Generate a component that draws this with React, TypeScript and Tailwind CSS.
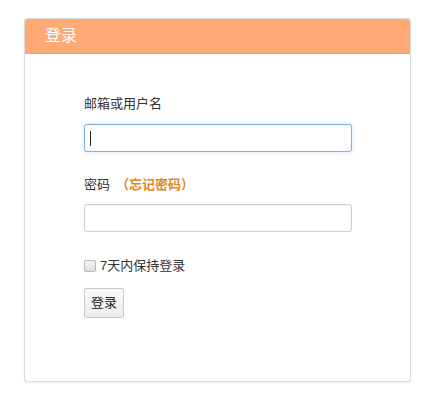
import React from "react";

export default function App() {
  return (
    <div
      className="min-h-[407px] w-[432px] bg-white pt-[18px] pl-[24px]"
      style={{ fontFamily: '"Liberation Sans", "Noto Sans CJK SC", sans-serif' }}
    >
      <div className="w-[387px] rounded-[3px] border border-[#dcdcdc] bg-white shadow-[0_1px_2px_rgba(0,0,0,0.08)]">
        {/* header */}
        <div className="flex h-[35px] items-center rounded-t-[3px] border-b border-[#f5a06a] bg-[#ffaa74] pl-[20px] text-[16px] text-white">
          登录
        </div>

        {/* body */}
        <div className="pl-[59px] pt-[40px] pb-[63px] text-[13px] text-[#333]">
          <div className="mb-[10px] h-[20px] leading-[20px]">邮箱或用户名</div>
          <div className="relative h-[28px] w-[268px] rounded-[3px] border border-[#7fb2d8] bg-white shadow-[inset_0_1px_1px_rgba(0,0,0,0.05),0_0_4px_rgba(102,175,233,0.35)]">
            <span className="absolute left-[5px] top-[6px] h-[15px] w-px bg-[#222]" />
          </div>

          <div className="mt-[23px] mb-[9px] h-[20px] leading-[20px]">
            密码<span className="ml-[6px] font-bold text-[#e0881c]">（忘记密码）</span>
          </div>
          <div className="h-[28px] w-[268px] rounded-[3px] border border-[#cccccc] bg-white shadow-[inset_0_1px_1px_rgba(0,0,0,0.05)]" />

          <div className="mt-[24px] flex h-[20px] items-center gap-[4px] leading-[20px]">
            <span className="h-[12px] w-[12px] rounded-[2px] border border-[#b5b5b5] bg-gradient-to-b from-[#f4f4f4] to-[#dedede]" />
            <span>7天内保持登录</span>
          </div>

          <div className="mt-[12px] flex h-[30px] w-[40px] items-center justify-center rounded-[2px] border border-[#c8c8c8] bg-gradient-to-b from-[#fafafa] to-[#ececec] text-[13px] text-[#222]">
            登录
          </div>
        </div>
      </div>
    </div>
  );
}
